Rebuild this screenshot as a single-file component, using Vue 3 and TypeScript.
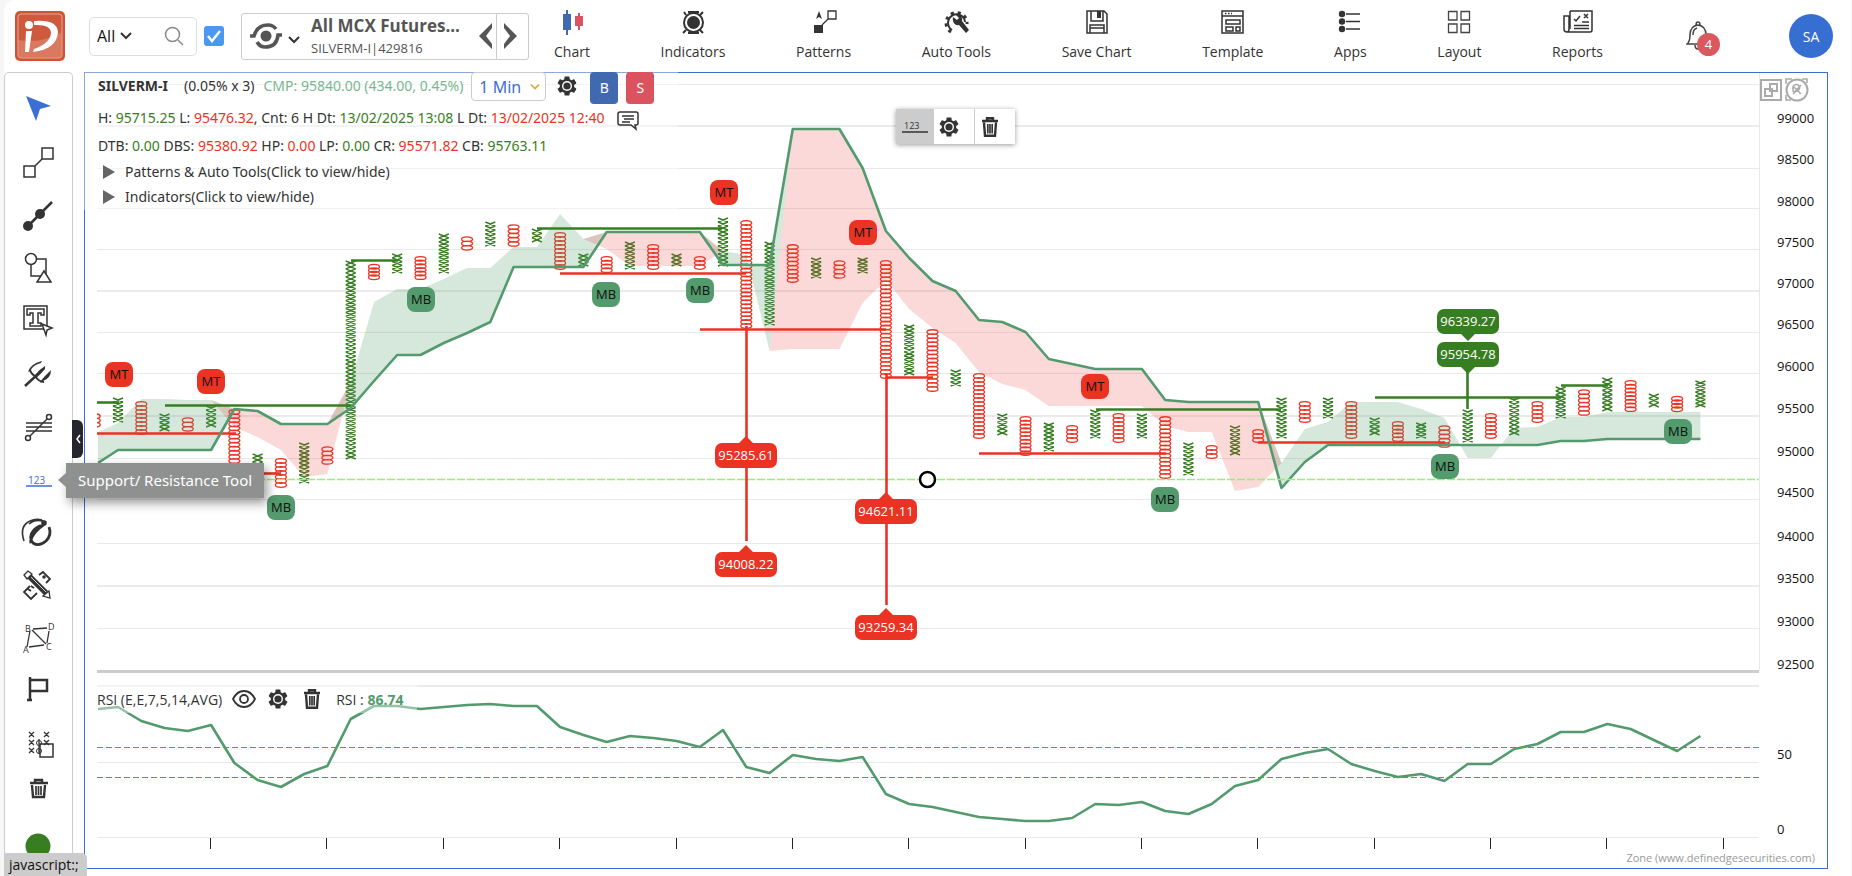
<script setup lang="ts">
import { ref } from 'vue'

type Kind = 'X' | 'O'
interface Column { kind: Kind; top: number; bottom: number }
interface Segment { x1: number; x2: number; y: number; tone: 'up' | 'down' }
interface Marker { x: number; y: number; text: 'MT' | 'MB' }
interface Target { x: number; y: number; text: string; tone: 'up' | 'down' }

const scope = ref('All')
const query = ref('')
const linked = ref(true)
const interval = ref('1 Min')

const menu = [
  { label: 'Chart', icon: 'candles' },
  { label: 'Indicators', icon: 'target' },
  { label: 'Patterns', icon: 'pattern' },
  { label: 'Auto Tools', icon: 'autotools' },
  { label: 'Save Chart', icon: 'save' },
  { label: 'Template', icon: 'template' },
  { label: 'Apps', icon: 'apps' },
  { label: 'Layout', icon: 'layout' },
  { label: 'Reports', icon: 'reports' },
]

const tools = [
  { label: 'Pointer', icon: 'pointer' },
  { label: 'Line Tool', icon: 'line' },
  { label: 'Trend Line', icon: 'trend' },
  { label: 'Shapes', icon: 'shapes' },
  { label: 'Text', icon: 'text' },
  { label: 'Pitchfork', icon: 'fork' },
  { label: 'Channels', icon: 'channel' },
  { label: 'Support/ Resistance Tool', icon: 'levels', tip: true },
  { label: 'Info', icon: 'info' },
  { label: 'Drawing', icon: 'draw' },
  { label: 'ABCD', icon: 'abcd' },
  { label: 'Flag', icon: 'flag' },
  { label: 'Box Count', icon: 'count' },
  { label: 'Delete', icon: 'bin' },
  { label: 'Status', icon: 'dot' },
]

const STEP = 23.27
const colX = (i: number) => Math.round((118 + STEP * i) * 10) / 10

const spans: [number, number][] = [
  [414, 427], [398, 422], [402, 434], [414, 431], [418, 431], [406, 427], [410, 463], [454, 466], [459, 487], [443, 483],
  [447, 464], [261, 459], [265, 279], [254, 273], [257, 279], [234, 273], [237, 250], [222, 246], [225, 246], [229, 242],
  [233, 269], [254, 266], [257, 272], [242, 269], [245, 269], [254, 266], [257, 269], [218, 266], [221, 328], [242, 325],
  [245, 282], [258, 278], [261, 278], [258, 273], [261, 378], [325, 375], [330, 391], [370, 386], [374, 438], [414, 435],
  [417, 455], [423, 451], [426, 442], [410, 438], [414, 442], [414, 438], [417, 478], [443, 475], [446, 458], [426, 455],
  [430, 442], [398, 438], [402, 422], [398, 418], [402, 438], [418, 435], [422, 441], [423, 438], [426, 447], [410, 442],
  [414, 438], [398, 435], [402, 422], [387, 418], [390, 415], [378, 411], [381, 411], [394, 407], [397, 411], [381, 407],
]
const columns: Column[] = spans.map(([top, bottom], n) => ({ kind: n % 2 ? 'X' : 'O', top, bottom }))

function glyphs(kind: Kind): string {
  const parts: string[] = []
  columns.forEach((c, n) => {
    if (c.kind !== kind) return
    const x = colX(n - 1)
    const count = Math.max(1, Math.round((c.bottom - c.top) / 4))
    const pitch = (c.bottom - c.top) / count
    for (let k = 0; k < count; k++) {
      const y = c.top + k * pitch
      if (kind === 'X') {
        parts.push(`M${x - 5} ${y}l10 ${pitch}m0 ${-pitch}l-10 ${pitch}`)
      } else {
        const m = y + pitch / 2
        parts.push(`M${x - 5.5} ${m}a5.5 2.3 0 1 0 11 0a5.5 2.3 0 1 0 -11 0`)
      }
    }
  })
  return parts.join('')
}
const xPath = glyphs('X')
const oPath = glyphs('O')

const base = [
  450, 450, 450, 450, 450, 409, 411, 424, 424, 424, 408, 381, 355, 355, 343, 333, 322, 267, 267, 267, 267, 232, 232, 232,
  232, 232, 265, 265, 265, 129, 129, 129, 168, 231, 258, 281, 291, 320, 322, 332, 359, 364, 369, 369, 369, 400, 402, 402,
  402, 402, 488, 462, 445, 445, 445, 445, 445, 445, 445, 445, 445, 445, 441, 441, 439, 439, 439, 439, 439,
]
const edge = [
  423, 399, 399, 400, 400, 427, 437, 450, 477, 474, 382, 302, 289, 289, 279, 268, 268, 247, 247, 214, 239, 249, 266, 266,
  266, 266, 251, 255, 351, 349, 349, 349, 303, 280, 309, 328, 343, 372, 384, 390, 406, 406, 406, 406, 406, 426, 432, 432,
  491, 487, 463, 429, 422, 402, 402, 402, 409, 418, 458, 458, 428, 427, 417, 417, 412, 412, 412, 412, 412,
]

const isBull = (i: number) => edge[i] < base[i] || i === 28 || i === 58 || i === 59
function band(bull: boolean): string {
  const upper: string[] = []
  const lower: string[] = []
  if (bull) {
    upper.push('98 432')
    lower.push('98 463')
  }
  for (let i = 0; i < base.length; i++) {
    const x = colX(i)
    const flat = i === 28 ? edge[i] : Math.min(base[i], edge[i])
    const own = isBull(i) === bull
    upper.push(`${x} ${own ? edge[i] : flat}`)
    lower.push(`${x} ${own ? base[i] : flat}`)
  }
  return `M${upper.join('L')}L${lower.reverse().join('L')}Z`
}
const bullBand = band(true)
const bearBand = band(false)
const baseLine = `98,463 ${base.map((y, i) => `${colX(i)},${y}`).join(' ')}`

const rsi = [
  707, 721, 728, 731, 725, 763, 780, 787, 774, 766, 719, 706, 706, 709, 707, 705, 704, 706, 706, 727, 735, 742, 736, 738,
  741, 747, 730, 767, 773, 755, 759, 761, 757, 794, 804, 807, 812, 817, 819, 821, 821, 818, 804, 805, 802, 811, 814, 804,
  786, 780, 759, 753, 749, 764, 771, 777, 774, 781, 764, 764, 749, 744, 732, 732, 724, 729, 740, 751, 736,
]
const rsiLine = `98,709 ${rsi.map((y, i) => `${colX(i)},${y}`).join(' ')}`

const prices = [
  { t: '99000', y: 118 }, { t: '98500', y: 159 }, { t: '98000', y: 201 }, { t: '97500', y: 242 }, { t: '97000', y: 283 },
  { t: '96500', y: 324 }, { t: '96000', y: 366 }, { t: '95500', y: 408 }, { t: '95000', y: 451 }, { t: '94500', y: 492 },
  { t: '94000', y: 536 }, { t: '93500', y: 578 }, { t: '93000', y: 621 }, { t: '92500', y: 664 }, { t: '50', y: 754 }, { t: '0', y: 829 },
]
const thin = [84, 168, 208, 249, 332, 373, 458, 499, 543, 628, 762, 837]
const thick = [126, 291, 416, 586, 686]
const ticks = Array.from({ length: 14 }, (_, k) => Math.round(colX(4 + 5 * k)) - 1)

const segments: Segment[] = [
  { x1: 97, x2: 119, y: 402, tone: 'up' },
  { x1: 165, x2: 351, y: 405, tone: 'up' },
  { x1: 351, x2: 398, y: 260, tone: 'up' },
  { x1: 537, x2: 722, y: 228, tone: 'up' },
  { x1: 1096, x2: 1281, y: 409, tone: 'up' },
  { x1: 1375, x2: 1561, y: 397, tone: 'up' },
  { x1: 1561, x2: 1608, y: 385, tone: 'up' },
  { x1: 97, x2: 236, y: 433, tone: 'down' },
  { x1: 258, x2: 281, y: 473, tone: 'down' },
  { x1: 560, x2: 746, y: 273, tone: 'down' },
  { x1: 700, x2: 886, y: 329, tone: 'down' },
  { x1: 886, x2: 933, y: 377, tone: 'down' },
  { x1: 979, x2: 1166, y: 453, tone: 'down' },
  { x1: 1258, x2: 1445, y: 442, tone: 'down' },
]
const markers: Marker[] = [
  { x: 119, y: 374, text: 'MT' }, { x: 211, y: 381, text: 'MT' }, { x: 724, y: 192, text: 'MT' },
  { x: 863, y: 232, text: 'MT' }, { x: 1095, y: 386, text: 'MT' }, { x: 421, y: 299, text: 'MB' },
  { x: 281, y: 507, text: 'MB' }, { x: 606, y: 294, text: 'MB' }, { x: 700, y: 290, text: 'MB' },
  { x: 1165, y: 499, text: 'MB' }, { x: 1445, y: 466, text: 'MB' }, { x: 1678, y: 431, text: 'MB' },
]
const targets: Target[] = [
  { x: 746, y: 455, text: '95285.61', tone: 'down' },
  { x: 746, y: 564, text: '94008.22', tone: 'down' },
  { x: 886, y: 511, text: '94621.11', tone: 'down' },
  { x: 886, y: 627, text: '93259.34', tone: 'down' },
  { x: 1468, y: 321, text: '96339.27', tone: 'up' },
  { x: 1468, y: 354, text: '95954.78', tone: 'up' },
]
</script>

<template>
  <div class="app">
    <svg class="sprite" aria-hidden="true">
      <symbol id="gear" viewBox="2 2 20 20">
        <path fill="#333" d="M19.14 12.94c.04-.3.06-.61.06-.94 0-.32-.02-.64-.07-.94l2.03-1.58c.18-.14.23-.41.12-.61l-1.92-3.32c-.12-.22-.37-.29-.59-.22l-2.39.96c-.5-.38-1.03-.7-1.62-.94l-.36-2.54c-.04-.24-.24-.41-.48-.41h-3.84c-.24 0-.43.17-.47.41l-.36 2.54c-.59.24-1.13.57-1.62.94l-2.39-.96c-.22-.08-.47 0-.59.22L2.74 8.87c-.12.21-.08.47.12.61l2.03 1.58c-.05.3-.09.63-.09.94s.02.64.07.94l-2.03 1.58c-.18.14-.23.41-.12.61l1.92 3.32c.12.22.37.29.59.22l2.39-.96c.5.38 1.03.7 1.62.94l.36 2.54c.05.24.24.41.48.41h3.84c.24 0 .44-.17.47-.41l.36-2.54c.59-.24 1.13-.56 1.62-.94l2.39.96c.22.08.47 0 .59-.22l1.92-3.32c.12-.22.07-.47-.12-.61z" />
        <circle cx="12" cy="12" r="5" fill="#fff" />
        <circle cx="12" cy="12" r="3.600" fill="#333" />
      </symbol>
      <symbol id="trash" viewBox="0 0 18 20">
        <path fill="none" stroke="#333" stroke-width="2.400" d="M1 4h16M6 3.500V1.300h6v2.200M3 5.500l1 13.300h10l1-13.300" />
        <path stroke="#333" stroke-width="1.700" d="M6.800 7v9.500M9 7v9.500M11.200 7v9.500" />
      </symbol>
      <symbol id="candles" viewBox="0 0 32 32">
        <path stroke="#4169b0" stroke-width="2" d="M11 3v25" /><path fill="#4169b0" d="M7 7h8v16H7z" />
        <path stroke="#dc5360" stroke-width="2" d="M23 6v17" /><path fill="#dc5360" d="M19 9h8v10h-8z" />
      </symbol>
      <symbol id="target" viewBox="0 0 32 32">
        <path fill="none" stroke="#333" stroke-width="2" d="M9 8L7 5M23 8l3-3M23 23l3 3M9 23l-3 3M11 5h11M11 26h11" />
        <circle cx="16.500" cy="15.500" r="9.500" fill="#fff" stroke="#333" stroke-width="2" /><circle cx="16.500" cy="15.500" r="6.500" fill="#333" />
      </symbol>
      <symbol id="pattern" viewBox="0 0 32 32">
        <path fill="#333" d="M11 4l3 8-3-2-3 2zM6 18h9v8H6z" />
        <path fill="none" stroke="#333" stroke-width="1.300" d="M20 4h8v8h-8zM20 12l-6 6" />
      </symbol>
      <symbol id="autotools" viewBox="0 0 32 32">
        <path fill="none" stroke="#333" stroke-width="2" d="M12 23a8.500 8.500 0 1 1 13-8" />
        <path fill="none" stroke="#333" stroke-width="3" stroke-dasharray="3.200 3.800" d="M11 25a10.500 10.500 0 1 1 16-8" />
        <path fill="#333" d="M13 10l4 3 2-2-3-3c4-1 7 2 6 6l7 9-3 3-7-8c-4 1-7-3-6-8z" />
      </symbol>
      <symbol id="save" viewBox="0 0 32 32">
        <path fill="none" stroke="#333" stroke-width="1.500" d="M6 4h17l3 3v19H6zM10 4v10h12V4M9 26v-8h14v8M9 21h14" />
        <path fill="#333" d="M16 4h4v7h-4z" />
      </symbol>
      <symbol id="template" viewBox="0 0 32 32">
        <path fill="none" stroke="#333" stroke-width="1.500" d="M5 4h21v22H5zM5 9h21M9 13h14v4H9zM9 20h7v4H9zM19 20h4v4h-4z" />
        <path stroke="#333" stroke-width="1.500" stroke-dasharray="1.500 1.500" d="M8 6.500h7" />
      </symbol>
      <symbol id="apps" viewBox="0 0 32 32">
        <circle cx="8" cy="7" r="3.200" fill="#333" /><circle cx="8" cy="14.500" r="3.200" fill="#333" /><circle cx="8" cy="22" r="3.200" fill="#333" />
        <path stroke="#333" stroke-width="1.500" d="M12 7h14M12 14.500h14M12 22h14" />
      </symbol>
      <symbol id="layout" viewBox="0 0 32 32">
        <path fill="none" stroke="#444" stroke-width="1.300" d="M5.500 4.500h8.500v8.500H5.500zM18 4.500h8.500v8.500H18zM5.500 17h8.500v8.500H5.500zM18 17h8.500v8.500H18z" />
      </symbol>
      <symbol id="reports" viewBox="0 0 32 32">
        <path fill="none" stroke="#333" stroke-width="1.500" d="M8 4h22v19q0 2-2 2H5q-3 0-3-3V9h5v13q0 3-2 3M8 4v18M12 12l2 2 4-5M22 7l4 4M26 7l-4 4M12 18.500h15M12 21.500h15M20 15h7" />
      </symbol>

      <symbol id="pointer" viewBox="0 0 40 40"><path fill="#3b6fd4" d="M8 7l25 10-11 3-4 12z" /></symbol>
      <symbol id="line" viewBox="0 0 40 40">
        <path fill="none" stroke="#333" stroke-width="1.500" d="M24 6h11v11H24zM6 24h11v11H6zM17 24l7-7" />
      </symbol>
      <symbol id="trend" viewBox="0 0 40 40">
        <path stroke="#333" stroke-width="2.500" d="M10 31L34 7" /><circle cx="10" cy="31" r="5" fill="#333" /><circle cx="22" cy="19" r="5" fill="#333" />
      </symbol>
      <symbol id="shapes" viewBox="0 0 40 40">
        <g fill="#fff" stroke="#333" stroke-width="1.500"><path d="M13 11h15v17H13z" /><circle cx="13" cy="11" r="5.500" /><path d="M26 23l7 11H19z" /></g>
      </symbol>
      <symbol id="text" viewBox="0 0 40 40">
        <g fill="#fff" stroke="#333" stroke-width="1.500"><path d="M6 5h23v23H6z" /><path d="M9 8h17v6h-3v-2h-3v10h3v3H12v-3h3V12h-3v2H9z" /><path d="M24 23l10 4-5 2-1 5z" /></g>
      </symbol>
      <symbol id="fork" viewBox="0 0 40 40">
        <path fill="none" stroke="#333" stroke-width="2.500" d="M7 32L20 20" />
        <path fill="none" stroke="#333" stroke-width="2" d="M12 15q0 4 5 7 4 6 9 6" />
        <path fill="#333" d="M10 18q2-8 14-11l-1 2q-8 2-11 8zM16 24l2-4q4-5 9-8l0 3q-4 5-9 9zM22 29q1-3 5-7l6-6q0 8-8 11z" />
      </symbol>
      <symbol id="channel" viewBox="0 0 40 40">
        <path stroke="#333" stroke-width="1.500" d="M8 16h26M8 20h26M8 24h26M12 29L29 12" />
        <circle cx="10" cy="31" r="2.500" fill="#fff" stroke="#333" stroke-width="1.500" /><circle cx="31" cy="10" r="2.500" fill="#fff" stroke="#333" stroke-width="1.500" />
      </symbol>
      <symbol id="info" viewBox="0 0 40 40">
        <path fill="none" stroke="#333" stroke-width="1.600" d="M6 28Q1 13 12 8q6-3 12-1M28 9Q18 5 11 11" />
        <path fill="none" stroke="#333" stroke-width="2.800" d="M31 14q3 8-3 14-7 6-13 2-5-6 1-13 5-5 8-4-6 4-10 11-2 4-1 6" />
        <circle cx="26" cy="10" r="2.800" fill="#333" />
      </symbol>
      <symbol id="draw" viewBox="0 0 40 40">
        <path fill="none" stroke="#333" stroke-width="1.800" d="M21 9l4-3 7 7-4 4M12 20l-6 6 7 7 6-6M10 23l3 2M13 20l3 2" />
        <circle cx="26" cy="11" r="1.800" fill="#333" />
        <path fill="#333" d="M12 7l18 18-4 4L8 11z" /><path fill="#fff" stroke="#333" stroke-width="1.300" d="M6 9l4-4 4 3-5 5zM31 25l1 7-7-2z" /><path stroke="#fff" stroke-width=".8" d="M13 11l15 15" />
      </symbol>
      <symbol id="flag" viewBox="0 0 40 40"><path fill="none" stroke="#333" stroke-width="2.500" d="M12 5v23M9 28h5M12 8h17v11H12" /></symbol>
      <symbol id="count" viewBox="0 0 40 40">
        <path fill="none" stroke="#333" stroke-width="1.300" d="M11 7l5 5m0-5l-5 5M26 7l5 5m0-5l-5 5M11 15l5 5m0-5l-5 5M11 23l5 5m0-5l-5 5M26 15l5 5m0-5l-5 5M21 14v15" />
        <circle cx="21" cy="18" r="2.500" fill="none" stroke="#333" /><circle cx="21" cy="26" r="2.500" fill="none" stroke="#333" />
        <path fill="none" stroke="#333" stroke-width="1.500" d="M22 19h13v13H22z" />
      </symbol>
      <symbol id="bin" viewBox="0 0 40 40">
        <path fill="none" stroke="#333" stroke-width="2.400" d="M12 5h18M17 4V2h7v2M14 7l1 12h11l1-12" /><path stroke="#333" stroke-width="1.700" d="M18 8v9M20.500 8v9M23 8v9" />
      </symbol>
      <symbol id="dot" viewBox="0 0 40 40"><circle cx="20" cy="15" r="12.500" fill="#377e22" /></symbol>
    </svg>

    <header class="top">
      <svg class="logo" viewBox="0 0 52 52" role="img" aria-label="Definedge">
        <rect x="1" y="1" width="50" height="50" rx="5" fill="#cf5435" />
        <rect x="4" y="4" width="44" height="44" rx="3" fill="#cd5a3d" stroke="#e4a896" />
        <path fill="#e08d78" opacity=".6" d="M4 30Q28 34 48 22v24q0 2-2 2H6q-2 0-2-2z" />
        <circle cx="15" cy="15" r="4" fill="#fff" />
        <path fill="#fff" d="M12 21h6L15 42h-4zM20 11q23-2 24 11-1 17-25 20l1-3Q37 33 37 22q-1-8-17-7z" />
      </svg>
      <div class="search">
        <select v-model="scope" aria-label="Segment"><option>All</option></select>
        <svg class="caret" viewBox="0 0 12 8"><path d="M1 1l5 5 5-5" /></svg>
        <input v-model="query" type="text" aria-label="Search symbol" />
        <svg class="lens" viewBox="0 0 20 20"><circle cx="8.500" cy="8.500" r="7" /><path d="M14 14l5 5" /></svg>
      </div>
      <label class="tick">
        <input v-model="linked" type="checkbox" aria-label="Link symbol" />
        <svg viewBox="0 0 20 20"><rect width="20" height="20" rx="3" /><path d="M4 10l4 5 8-10" /></svg>
      </label>
      <div class="symbol">
        <button class="pick" aria-label="Choose watchlist">
          <svg class="orbit" viewBox="0 0 36 28">
            <circle cx="18" cy="14" r="5.500" /><path d="M2 14h4q3-11 14-11 5 0 8 4M34 13h-4q-1 12-13 12-5 0-8-5" />
          </svg>
          <svg class="caret" viewBox="0 0 12 8"><path d="M1 1l5 5 5-5" /></svg>
          <span class="names"><b>All MCX Futures...</b><span>SILVERM-I|429816</span></span>
        </button>
        <button class="step prev" aria-label="Previous"><svg viewBox="0 0 14 26"><path d="M13 0v5L7 13l6 8v5L0 13z" /></svg></button>
        <button class="step" aria-label="Next"><svg viewBox="0 0 14 26"><path d="M1 0v5l6 8-6 8v5l13-13z" /></svg></button>
      </div>
      <nav class="menu">
        <button v-for="m in menu" :key="m.label"><svg><use :href="'#' + m.icon" /></svg>{{ m.label }}</button>
      </nav>
      <button class="bell" aria-label="Notifications">
        <svg viewBox="0 0 26 30"><path d="M1 23q3-2 3-9 0-9 8-10 8 1 8 10 0 7 3 9zM9 24q0 4 3 4t3-4M10 4q0-3 2-3t2 3M7 14q0-6 4-7" /></svg>
        <span>4</span>
      </button>
      <button class="avatar">SA</button>
    </header>

    <div class="body">
      <aside class="tools">
        <button v-for="t in tools" :key="t.icon" :aria-label="t.label">
          <svg v-if="t.icon === 'levels'" viewBox="0 0 40 40">
            <text x="10" y="24" font-size="10" fill="#3b6fd4">123</text><path stroke="#3b6fd4" stroke-width="1.500" d="M8 26h26" />
          </svg>
          <svg v-else-if="t.icon === 'abcd'" viewBox="0 0 40 40">
            <path fill="none" stroke="#333" stroke-width="1.300" d="M15 10l14-1M12 12L9 28M14 11l14 14M11 28l15-2M29 24l2-12" />
            <g font-size="9" fill="#333"><text x="7" y="13">B</text><text x="30" y="11">D</text><text x="5" y="34">A</text><text x="28" y="31">C</text></g>
          </svg>
          <svg v-else><use :href="'#' + t.icon" /></svg>
          <span v-if="t.tip" class="tip">{{ t.label }}</span>
        </button>
        <button class="handle" aria-label="Collapse"><svg viewBox="0 0 6 10"><path d="M5 1L2 5l3 4" /></svg></button>
      </aside>

      <main class="panel">
        <svg class="plot" viewBox="85 73 1742 795">
          <defs><clipPath id="area"><path d="M97 73h1663v776H97z" /></clipPath></defs>
          <g class="grid">
            <path v-for="y in thin" :key="y" :d="`M97 ${y}.5H1759`" />
            <path v-for="y in thick" :key="y" class="wide" :d="`M97 ${y}H1759`" />
            <path d="M1759.500 73V671" />
            <path class="split" d="M97 671.500H1759" />
          </g>
          <path v-for="t in ticks" :key="t" class="tickmark" :d="`M${t}.5 838v11`" />
          <g class="axis">
            <text v-for="p in prices" :key="p.t" x="1777" :y="p.y + 5">{{ p.t }}</text>
          </g>
          <text class="zone" x="1815" y="862">Zone (www.definedgesecurities.com)</text>

          <g clip-path="url(#area)">
            <path class="xs" :d="xPath" />
            <path class="os" :d="oPath" />
            <path class="bull" :d="bullBand" />
            <path class="bear" :d="bearBand" />
            <path v-for="(s, n) in segments" :key="n" :class="['seg', s.tone]" :d="`M${s.x1} ${s.y}.5H${s.x2}`" />
            <polyline class="line" :points="baseLine" />
            <path class="cursor" d="M97 479.500H1759" />
            <path class="seg down" d="M746.500 326V541M886.500 374V605" />
            <path class="seg up" d="M1467.500 370V409" />
          </g>
          <g v-for="(m, n) in markers" :key="'m' + n" :class="['mark', m.text]">
            <rect :x="m.x - 14" :y="m.y - 12" width="28" height="25" rx="8" /><text :x="m.x" :y="m.y + 5">{{ m.text }}</text>
          </g>
          <g v-for="t in targets" :key="t.text" :class="['target', t.tone]">
            <path v-if="t.tone === 'down'" :d="`M${t.x - 8} ${t.y - 11}l8-8 8 8z`" />
            <path v-else :d="`M${t.x - 8} ${t.y + 12}l8 8 8-8z`" />
            <rect :x="t.x - 31" :y="t.y - 12" width="62" height="25" rx="7" /><text :x="t.x" :y="t.y + 5">{{ t.text }}</text>
          </g>
          <circle class="knob" cx="927.500" cy="479.500" r="7.500" />
          <path class="bound" d="M97 747.500H1759M97 777.500H1759" />
          <polyline class="line" :points="rsiLine" />
        </svg>

        <section class="legend">
          <div class="row first">
            <b>SILVERM-I</b><span class="box">(0.05% x 3)</span><span class="cmp">CMP: 95840.00 (434.00, 0.45%)</span>
            <span class="interval">
              <select v-model="interval" aria-label="Interval"><option>1 Min</option></select>
              <svg class="caret gold" viewBox="0 0 12 8"><path d="M1 1l5 5 5-5" /></svg>
            </span>
            <button class="cog" aria-label="Chart settings"><svg class="i20"><use href="#gear" /></svg></button>
            <button class="trade buy">B</button><button class="trade sell">S</button>
          </div>
          <div class="row">
            <span>H: <i class="g">95715.25</i> L: <i class="r">95476.32</i>, Cnt: 6 H Dt: <i class="g">13/02/2025 13:08</i> L Dt: <i class="r">13/02/2025 12:40</i></span>
            <button class="note" aria-label="Notes"><svg viewBox="0 0 22 20"><path d="M3 1h16q2 0 2 2v9q0 2-2 2h-1l1 4-5-4H3q-2 0-2-2V3q0-2 2-2zM5 5h12M7 8h10M5 11h8" /></svg></button>
          </div>
          <div class="row">
            <span>DTB: <i class="g">0.00</i> DBS: <i class="r">95380.92</i> HP: <i class="r">0.00</i> LP: <i class="g">0.00</i> CR: <i class="r">95571.82</i> CB: <i class="g">95763.11</i></span>
          </div>
          <button class="fold"><svg viewBox="0 0 12 14"><path d="M0 0l12 7-12 7z" /></svg>Patterns &amp; Auto Tools(Click to view/hide)</button>
          <button class="fold"><svg viewBox="0 0 12 14"><path d="M0 0l12 7-12 7z" /></svg>Indicators(Click to view/hide)</button>
        </section>

        <div class="floating">
          <button class="on" aria-label="Support resistance style"><svg viewBox="0 0 26 14"><text x="2" y="9">123</text><path d="M0 12h26" /></svg></button>
          <button aria-label="Tool settings"><svg class="i20"><use href="#gear" /></svg></button>
          <button aria-label="Remove tool"><svg class="i20"><use href="#trash" /></svg></button>
        </div>

        <div class="window">
          <button aria-label="Pop out"><svg viewBox="0 0 22 22"><path d="M1 1h20v20H1zM10 5h7v7h-7zM5 10h7v7H5z" /></svg></button>
          <button aria-label="Close chart"><svg viewBox="0 0 24 24"><circle cx="12" cy="12" r="10.500" /><path class="fine" d="M1 6V1h6M17 1h5v4M1 17v5h5M8 8q4-3 6 0t-2 5-4-1 0-4M8 16l8-9M9 9l7 7" /></svg></button>
        </div>

        <section class="rsi">
          <span>RSI (E,E,7,5,14,AVG)</span>
          <button aria-label="Show"><svg class="eye" viewBox="0 0 24 20"><path d="M1 10q4-8 11-8t11 8q-4 8-11 8T1 10z" /><circle cx="12" cy="10" r="4" /></svg></button>
          <button aria-label="RSI settings"><svg class="i20"><use href="#gear" /></svg></button>
          <button aria-label="Remove RSI"><svg class="i20"><use href="#trash" /></svg></button>
          <span>RSI : <b>86.74</b></span>
        </section>
      </main>
    </div>
    <div class="status">javascript:;</div>
  </div>
</template>

<style>
body { margin: 0; background: #f6f6f6; }
</style>

<style scoped>
.app {
  font-family: "Open Sans", "Noto Sans", sans-serif; font-size: 14px; color: #333;
  background: #fff; min-height: 100vh; box-sizing: border-box; position: relative; overflow: hidden;
  margin: 0 1px 0 4px; border-radius: 12px 0 0 0;
}
button { font: inherit; color: inherit; background: none; border: 0; padding: 0; cursor: pointer; }
select, input { font: inherit; border: 0; background: none; padding: 0; outline: none; appearance: none; color: inherit; }
.sprite { position: absolute; width: 0; height: 0; }
svg { display: block; flex: none; }
b { font-weight: 700; }

.top { display: flex; align-items: center; height: 72px; padding: 0 18px 0 10px; box-sizing: border-box; }
.logo { width: 52px; height: 52px; margin-right: 23px; }
.search { display: flex; align-items: center; width: 108px; height: 39px; box-sizing: border-box; border: 1px solid #ddd; border-radius: 5px; padding: 0 12px 0 7px; color: #111; font-size: 16px; }
.search input { flex: 1; min-width: 0; }
.search select { margin-right: 4px; }
.caret { width: 12px; height: 8px; fill: none; stroke: #333; stroke-width: 2; }
.gold { stroke: #d9a83c; width: 10px; }
.lens { width: 20px; height: 20px; fill: none; stroke: #888; stroke-width: 1.5; }
.tick { position: relative; width: 20px; height: 20px; margin: 0 17px 0 7px; }
.tick input { position: absolute; inset: 0; margin: 0; opacity: 0; }
.tick svg { width: 20px; height: 20px; }
.tick rect { fill: #4a98f0; }
.tick path { fill: none; stroke: #fff; stroke-width: 2.5; }
.symbol { display: flex; width: 288px; height: 47px; box-sizing: border-box; border: 1px solid #ccc; border-radius: 3px; color: #555; }
.pick { display: flex; align-items: center; flex: 1; text-align: left; padding-left: 6px; }
.pick .caret { margin: 8px 11px 0 4px; }
.orbit { width: 36px; height: 28px; fill: #555; }
.orbit path { fill: none; stroke: #555; stroke-width: 3.5; }
.names { display: flex; flex-direction: column; font-size: 13px; line-height: 20px; white-space: nowrap; }
.names b { font-size: 17px; line-height: 24px; }
.step { width: 31px; display: flex; align-items: center; padding-left: 6px; }
.step.prev { width: 18px; padding: 0; border-right: 1px solid #ccc; }
.step svg { width: 14px; height: 26px; fill: #555; }
.menu { flex: 1; display: flex; justify-content: space-between; margin: 0 83px 0 25px; }
.menu button { display: flex; flex-direction: column; align-items: center; gap: 4px; line-height: 18px; white-space: nowrap; padding-bottom: 4px; }
.menu svg { width: 32px; height: 32px; }
.bell { position: relative; width: 34px; height: 36px; margin-right: 69px; }
.bell svg { width: 26px; height: 30px; fill: none; stroke: #444; stroke-width: 1.5; }
.bell span { position: absolute; right: 0; bottom: -2px; width: 23px; height: 23px; border-radius: 50%; background: #d9595f; color: #fff; font-size: 13px; line-height: 23px; }
.avatar { width: 44px; height: 44px; border-radius: 50%; background: #376ed2; color: #fff; font-size: 14px; }

.body { display: flex; align-items: flex-start; }
.tools { position: relative; z-index: 2; width: 69px; box-sizing: border-box; border: 1px solid #ccc; border-bottom: 0; border-radius: 5px 5px 0 0; padding-top: 9px; display: flex; flex-direction: column; flex: none; }
.tools > button:not(.handle) { height: 53px; padding-left: 13px; display: flex; align-items: center; position: relative; }
.tools svg { width: 40px; height: 40px; }
.tip { position: absolute; left: 61px; top: 10px; height: 35px; line-height: 35px; padding: 0 12px; background: #8f9190; color: #fff; font-family: "Noto Sans", "Open Sans", sans-serif; font-size: 15px; white-space: nowrap; box-shadow: 3px 5px 10px rgba(0, 0, 0, .4); }
.tip::before { content: ""; position: absolute; left: -8px; top: 10px; border: solid transparent; border-width: 7px 8px 7px 0; border-right-color: #8f9190; }
.handle { position: absolute; left: 67px; top: 347px; width: 11px; height: 38px; background: #26262e; border-radius: 0 6px 6px 0; display: flex; align-items: center; justify-content: center; }
.handle svg { width: 6px; height: 10px; fill: none; stroke: #fff; stroke-width: 1.5; }

.panel { position: relative; flex: 1; min-width: 0; border: 1px solid #3b6dce; margin: 0 23px 0 11px; }
.plot { width: 100%; height: auto; font-size: 13px; }
.grid path { stroke: #e9e9e9; fill: none; }
.grid .wide { stroke: #ebebeb; stroke-width: 2; }
.grid .split { stroke: #ccc; stroke-width: 3; }
.tickmark { stroke: #222; stroke-width: 1; }
.axis { fill: #111; }
.zone { fill: #999; text-anchor: end; font-size: 11px; }
.xs { fill: none; stroke: #377e22; stroke-width: 1.4; }
.os { fill: none; stroke: #ea3323; stroke-width: 1.3; }
.bull { fill: rgba(83, 154, 110, .24); }
.bear { fill: rgba(228, 64, 58, .2); }
.seg { fill: none; stroke-width: 2.6; }
.seg.up { stroke: #377e22; }
.seg.down { stroke: #ea3323; }
.line { fill: none; stroke: #539a6d; stroke-width: 2.6; stroke-linejoin: round; }
.cursor { fill: none; stroke: #91f570; stroke-width: 1.4; stroke-dasharray: 8 2; }
.bound { fill: none; stroke: #e23be5; stroke-dasharray: 6 3; }
.mark text, .target text { text-anchor: middle; }
.MT rect, .target.down { fill: #ea3323; }
.MB rect { fill: #539a6d; }
.mark text { fill: #111; }
.target.up { fill: #377e22; }
.target text { fill: #fff; }
.knob { fill: #fff; stroke: #000; stroke-width: 2.5; }

.legend { position: absolute; left: -1px; top: -1px; width: 594px; height: 138px; box-sizing: border-box; padding-left: 14px; background: rgba(255, 255, 255, .4); white-space: nowrap; font-family: "Noto Sans", "Open Sans", sans-serif; }
.row { display: flex; align-items: center; height: 28px; }
.row.first { height: 31px; align-items: flex-start; line-height: 28px; }
.row i { font-style: normal; }
.g { color: #377e22; }
.r { color: #ea3323; }
.box { margin-left: 16px; }
.cmp { margin-left: 9px; color: #78b78f; }
.interval { display: flex; align-items: center; box-sizing: border-box; width: 75px; height: 29px; border: 1px solid #ccc; border-radius: 4px; padding: 0 5px 0 7px; margin: 0 11px 0 8px; color: #3b6fd4; font-size: 16px; background: #fff; }
.interval select { flex: 1; min-width: 0; }
.i20 { width: 20px; height: 20px; }
.cog { margin-top: 4px; }
.trade { width: 28px; height: 32px; border-radius: 4px; color: #fff; margin-left: 13px; }
.trade + .trade { margin-left: 8px; }
.buy { background: #4169b0; }
.sell { background: #dc5360; }
.note { margin: 8px 0 0 12px; }
.note svg { width: 22px; height: 20px; fill: none; stroke: #333; stroke-width: 1.5; }
.fold { display: flex; align-items: center; gap: 10px; height: 25px; padding-left: 5px; }
.fold svg { width: 12px; height: 14px; fill: #666; }

.floating { position: absolute; left: 811px; top: 36px; display: flex; background: #fff; box-shadow: 0 1px 5px rgba(0, 0, 0, .4); }
.floating button { width: 41px; height: 35px; display: flex; align-items: center; padding-left: 5px; box-sizing: border-box; border-left: 1px solid #ccc; }
.floating .on { width: 37px; background: #ccc; }
.floating .on svg { width: 26px; height: 14px; font-size: 9px; fill: #333; stroke-width: 1.5; }
.floating .on path { stroke: #333; }
.window { position: absolute; right: 18px; top: 5px; display: flex; align-items: center; gap: 3px; }
.window svg { width: 24px; height: 24px; fill: none; stroke: #aaa; stroke-width: 2; }
.window .fine { stroke-width: 1.6; }
.window button:first-child svg { width: 22px; height: 22px; }

.rsi { position: absolute; left: 0; top: 612px; height: 28px; display: flex; align-items: center; padding: 0 14px 0 12px; background: rgba(255, 255, 255, .4); white-space: nowrap; }
.rsi button { margin-left: 14px; }
.rsi button + span { margin-left: 14px; }
.rsi b { color: #539a6d; }
.eye { width: 24px; height: 20px; fill: none; stroke: #333; stroke-width: 1.8; }
.rsi button:nth-of-type(1) { margin-left: 10px; }
.rsi button:nth-of-type(2) { margin-left: 12px; }
.status { position: absolute; z-index: 3; left: 0; bottom: 0; height: 24px; line-height: 24px; padding: 0 8px 0 5px; background: #ccc; color: #111; border-radius: 0 5px 0 0; font-size: 14px; }
</style>
